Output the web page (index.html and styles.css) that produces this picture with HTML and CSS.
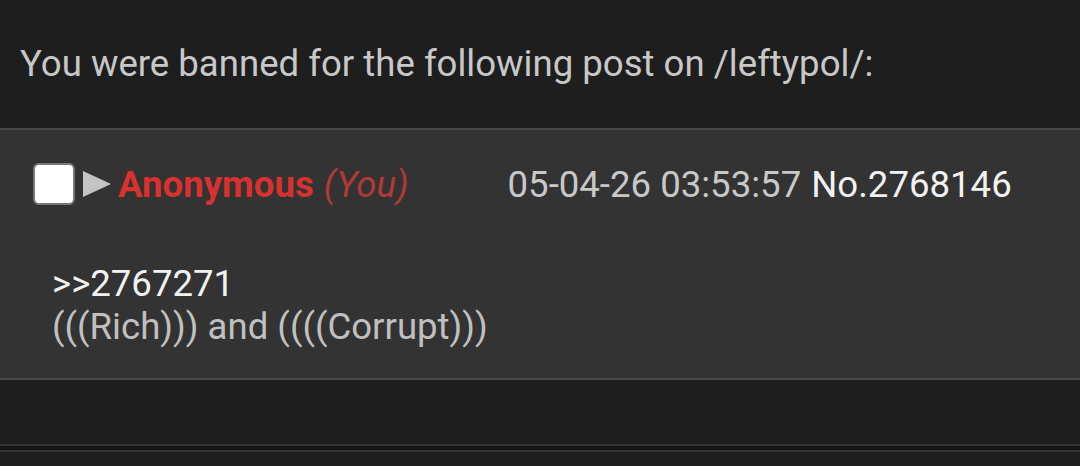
FILE: index.html
```html
<!DOCTYPE html>
<html lang="en">
<head>
    <meta charset="UTF-8">
    <title>Banned</title>
    <link rel="stylesheet" href="styles.css">
</head>
<body>
    <p class="ban-note">You were banned for the following post on /leftypol/:</p>

    <div class="post">
        <div class="post-head">
            <span class="check"></span>
            <svg class="arrow" width="28" height="26" viewBox="0 0 28 26"><polygon points="0,0 28,13 0,26" fill="#c4c4c4"/></svg>
            <span class="name">Anonymous</span>
            <span class="you">(You)</span>
            <span class="date">05-04-26 03:53:57</span>
            <span class="num">No.2768146</span>
        </div>
        <div class="post-body">
            <div class="quote">&gt;&gt;2767271</div>
            <div class="text">(((Rich))) and ((((Corrupt)))</div>
        </div>
    </div>

    <div class="bottom-bar"></div>
</body>
</html>
```

FILE: styles.css
```css
body {
    background-color: #1e1e1e;
    font-family: Roboto, "Liberation Sans", sans-serif;
    color: #c8c8c8;
    margin: 0;
    padding: 0;
}
.ban-note {
    font-size: 36.6px;
    margin: 0;
    padding: 44px 20px 0;
    height: 84px;
    line-height: 40px;
}
.post {
    background-color: #333333;
    border-top: 2px solid #4a4a4a;
    border-bottom: 2px solid #4a4a4a;
    height: 248px;
}
.post-head {
    display: flex;
    align-items: center;
    padding: 33px 0 0 33px;
    font-size: 36.6px;
    height: 42px;
}
.check {
    width: 38px;
    height: 38px;
    background: #fff;
    border: 2px solid #777;
    border-radius: 6px;
}
.arrow {
    margin-left: 8px;
}
.name {
    color: #d9312f;
    font-weight: bold;
    margin-left: 7px;
}
.you {
    color: #b03a36;
    font-style: italic;
    margin-left: 10px;
}
.date {
    color: #c8c8c8;
    margin-left: 99px;
}
.num {
    color: #f2f2f2;
    margin-left: 10px;
}
.post-body {
    padding: 57px 0 0 52px;
    font-size: 36.6px;
    line-height: 43px;
}
.quote {
    color: #f2f2f2;
}
.text {
    color: #c0c0c0;
}
.bottom-bar {
    margin-top: 64px;
    height: 4px;
    border-top: 2px solid #333;
    border-bottom: 2px solid #333;
    background: #161616;
}
```
